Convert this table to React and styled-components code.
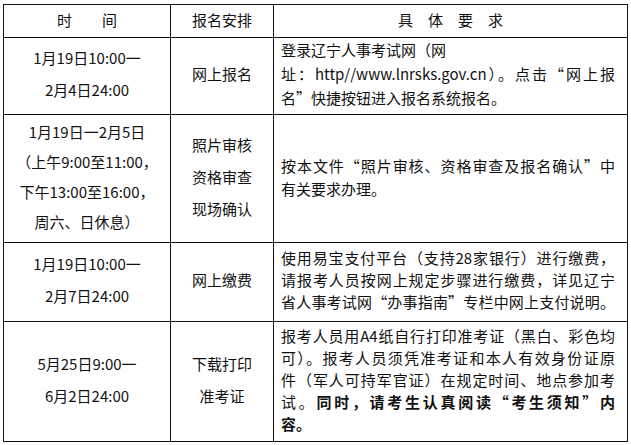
import React from "react";
import styled, { createGlobalStyle } from "styled-components";

const GlobalStyle = createGlobalStyle`
  html, body {
    margin: 0;
    padding: 0;
    background: #fff;
  }
  body {
    font-family: "Noto Sans CJK SC", "Liberation Sans", sans-serif;
    color: #111;
  }
`;

const Page = styled.div`
  padding: 4px 4px 0 3px;
`;

const Table = styled.table`
  border-collapse: collapse;
  width: 624px;
  table-layout: fixed;
  font-size: 15px;
`;

const Cell = styled.td`
  border: 1px solid #111;
  height: ${(p) => p.$h}px;
  padding: 0 0 4px;
  vertical-align: middle;
  text-align: center;
  box-sizing: border-box;
`;

const HeadCell = styled(Cell).attrs({ as: "th" })`
  font-weight: normal;
  line-height: 20px;
  padding-bottom: 2px;
`;

const CenterText = styled.div`
  line-height: ${(p) => p.$lh || 32}px;
  white-space: nowrap;
`;

const DetailCell = styled(Cell)`
  text-align: left;
  padding: 0 12px 4px 7px;
`;

const Line = styled.div`
  line-height: ${(p) => p.$lh}px;
  white-space: nowrap;
  text-align: ${(p) => (p.$fill ? "justify" : "left")};
  text-align-last: ${(p) => (p.$fill ? "justify" : "left")};
`;

const Strong = styled.b`
  font-weight: 700;
`;

const rows = [
  {
    h: 77,
    lh: 24,
    time: ["1月19日10:00一", "2月4日24:00"],
    plan: ["网上报名"],
    lines: [
      { t: "登录辽宁人事考试网（网" },
      { t: "址：http//www.lnrsks.gov.cn）。点击“网上报", fill: true },
      { t: "名”快捷按钮进入报名系统报名。" },
    ],
  },
  {
    h: 128,
    lh: 23,
    tlh: 30,
    time: [
      "1月19日一2月5日",
      "（上午9:00至11:00，",
      "下午13:00至16:00，",
      "周六、日休息）",
    ],
    plan: ["照片审核", "资格审查", "现场确认"],
    lines: [
      { t: "按本文件“照片审核、资格审查及报名确认”中", fill: true },
      { t: "有关要求办理。" },
    ],
  },
  {
    h: 79,
    lh: 22,
    time: ["1月19日10:00一", "2月7日24:00"],
    plan: ["网上缴费"],
    lines: [
      { t: "使用易宝支付平台（支持28家银行）进行缴费，", fill: true },
      { t: "请报考人员按网上规定步骤进行缴费，详见辽宁", fill: true },
      { t: "省人事考试网“办事指南”专栏中网上支付说明。", fill: true },
    ],
  },
  {
    h: 120,
    lh: 22,
    time: ["5月25日9:00一", "6月2日24:00"],
    plan: ["下载打印", "准考证"],
    lines: [
      { t: "报考人员用A4纸自行打印准考证（黑白、彩色均", fill: true },
      { t: "可）。报考人员须凭准考证和本人有效身份证原", fill: true },
      { t: "件（军人可持军官证）在规定时间、地点参加考", fill: true },
      {
        t: (
          <>
            试。<Strong>同时，请考生认真阅读“考生须知”内</Strong>
          </>
        ),
        fill: true,
      },
      { t: <Strong>容。</Strong> },
    ],
  },
];

export default function App() {
  return (
    <Page lang="zh-CN">
      <GlobalStyle />
      <Table>
        <colgroup>
          <col style={{ width: 167 }} />
          <col style={{ width: 103 }} />
          <col style={{ width: 354 }} />
        </colgroup>
        <thead>
          <tr>
            <HeadCell $h={33}>时　　间</HeadCell>
            <HeadCell $h={33}>报名安排</HeadCell>
            <HeadCell $h={33}>具　体　要　求</HeadCell>
          </tr>
        </thead>
        <tbody>
          {rows.map((r, i) => (
            <tr key={i}>
              <Cell $h={r.h}>
                {r.time.map((t) => (
                  <CenterText key={t} $lh={r.tlh}>
                    {t}
                  </CenterText>
                ))}
              </Cell>
              <Cell $h={r.h}>
                {r.plan.map((t) => (
                  <CenterText key={t}>{t}</CenterText>
                ))}
              </Cell>
              <DetailCell $h={r.h}>
                {r.lines.map((l, j) => (
                  <Line key={j} $lh={r.lh} $fill={l.fill}>
                    {l.t}
                  </Line>
                ))}
              </DetailCell>
            </tr>
          ))}
        </tbody>
      </Table>
    </Page>
  );
}
